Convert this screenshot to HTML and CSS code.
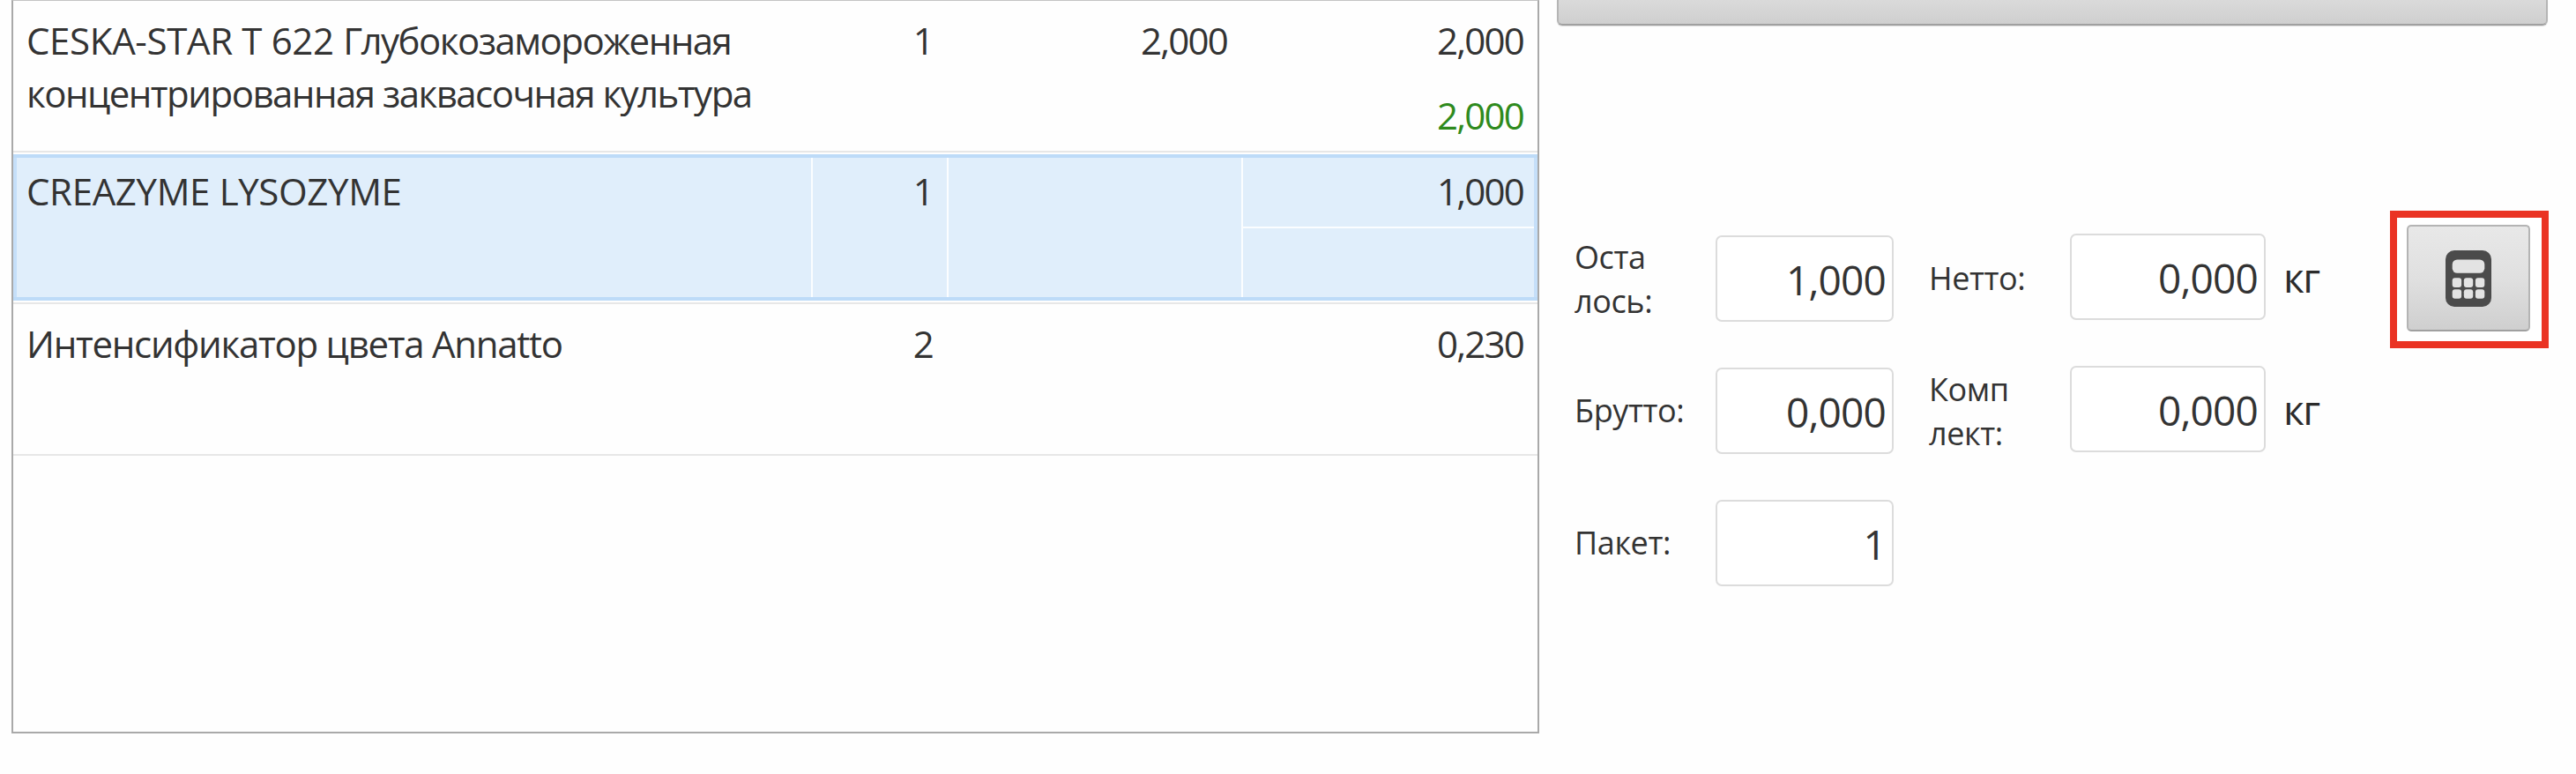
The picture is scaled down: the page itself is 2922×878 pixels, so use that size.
FILE: index.html
```html
<!DOCTYPE html>
<html lang="ru">
<head>
<meta charset="utf-8">
<title>Комплектация</title>
<link rel="stylesheet" href="styles.css">
</head>
<body>
<main class="screen">
  <section class="table">
    <div class="row">
      <div class="cells">
        <div class="cell name"><span class="latin">CESKA-STAR T 622 </span><span class="cyr">Глубокозамороженная</span><br><span class="cyr">концентрированная заквасочная культура</span></div>
        <div class="cell num">1</div>
        <div class="cell num">2,000</div>
        <div class="cell num split"><div class="upper">2,000</div><div class="lower">2,000</div></div>
      </div>
    </div>
    <div class="row selected">
      <div class="cells">
        <div class="cell name"><span class="latin">CREAZYME LYSOZYME</span></div>
        <div class="cell num">1</div>
        <div class="cell num"></div>
        <div class="cell num split"><div class="upper">1,000</div><div class="lower"></div></div>
      </div>
    </div>
    <div class="row">
      <div class="cells">
        <div class="cell name"><span class="mixed">Интенсификатор цвета Annatto</span></div>
        <div class="cell num">2</div>
        <div class="cell num"></div>
        <div class="cell num split"><div class="upper">0,230</div><div class="lower"></div></div>
      </div>
    </div>
  </section>
  <section class="side">
    <div class="bar"></div>
    <div class="controls">
      <div class="form">
        <div class="label two">Оста<br>лось:</div>
        <div class="field">1,000</div>
        <div class="label mid">Нетто:</div>
        <div class="field raised">0,000</div>
        <div class="unit">кг</div>
        <div class="label">Брутто:</div>
        <div class="field">0,000</div>
        <div class="label mid two">Комп<br>лект:</div>
        <div class="field raised">0,000</div>
        <div class="unit">кг</div>
        <div class="label">Пакет:</div>
        <div class="field">1</div>
      </div>
      <div class="highlight">
        <button class="calc" aria-label="Калькулятор">
          <svg width="52" height="64" viewBox="0 0 52 64">
            <rect width="52" height="64" rx="10" fill="#4b4b4b"/>
            <g fill="#e3e3e3">
              <rect x="7.7" y="10.5" width="36.6" height="15.3" rx="5.5"/>
              <rect x="7.7" y="31.3" width="10.4" height="10.6" rx="3"/>
              <rect x="20.8" y="31.3" width="10.4" height="10.6" rx="3"/>
              <rect x="33.9" y="31.3" width="10.4" height="10.6" rx="3"/>
              <rect x="7.7" y="44.2" width="10.4" height="10.6" rx="3"/>
              <rect x="20.8" y="44.2" width="10.4" height="10.6" rx="3"/>
              <rect x="33.9" y="44.2" width="10.4" height="10.6" rx="3"/>
            </g>
          </svg>
        </button>
      </div>
    </div>
  </section>
</main>
</body>
</html>
```
FILE: styles.css
```css
* { box-sizing: border-box; }
body {
  margin: 0;
  background: #fefefe;
  color: #333;
  font-family: "Open Sans", "Noto Sans", sans-serif;
}
.screen {
  display: flex;
  width: 2922px;
  height: 878px;
  padding-left: 13px;
  overflow: hidden;
}
.table {
  width: 1733px;
  height: 832px;
  border: 2px solid #a9a9a9;
  border-top: 1px solid #c4c4c4;
  background: #fefefe;
  font-size: 42px;
  line-height: 60px;
}
.row { height: 172px; border-bottom: 2px solid #e7e7e7; }
.cells {
  display: grid;
  grid-template-columns: 907px 154px 334px 334px;
  height: 170px;
}
.cell { padding: 15px 18px 0 15px; white-space: nowrap; }
.latin { letter-spacing: -0.35px; }
.cyr { letter-spacing: -1.52px; }
.mixed { letter-spacing: -1.27px; }
.num { text-align: right; letter-spacing: -1.8px; }
.split { padding: 0; }
.upper { height: 86px; padding: 15px 16px 0; }
.lower { height: 84px; padding: 14px 16px 0; color: #2f8a1d; }
.selected { padding: 2px 0; }
.selected .cells {
  height: 166px;
  background: #e0eefb;
  border-top: 4px solid #bddbf8;
  border-bottom: 4px solid #bddbf8;
  box-shadow: inset 4px 0 #c5dff9, inset -4px 0 #c5dff9;
}
.selected .cell { padding-top: 8px; border-right: 2px solid #fbfdff; }
.selected .num { padding-right: 16px; }
.selected .split { padding: 0 4px 0 0; border-right: 0; }
.selected .upper { height: 80px; padding: 8px 12px 0; border-bottom: 2px solid #fbfdff; }
.selected .lower { height: 78px; }
.side { width: 1176px; padding-left: 20px; }
.bar {
  width: 1124px;
  height: 29px;
  border: 2px solid #b5b5b5;
  border-top: 0;
  border-bottom-color: #a0a0a0;
  border-radius: 0 0 6px 6px;
  background: linear-gradient(#dadada, #cfcfcf);
  box-shadow: 0 1px 1px #ddd;
}
.controls { display: flex; align-items: flex-start; }
.form {
  display: grid;
  grid-template-columns: 160px 202px 200px 222px 80px;
  grid-template-rows: 98px 98px 98px;
  row-gap: 52px;
  padding: 238px 0 0 20px;
}
.label {
  padding-top: 24px;
  font-size: 36px;
  line-height: 50px;
  letter-spacing: -0.4px;
}
.two { padding-top: 0; }
.mid { padding-left: 40px; }
.field {
  height: 98px;
  padding-right: 7px;
  border: 2px solid #dcdcdc;
  border-radius: 7px;
  background: #fff;
  font-size: 46px;
  line-height: 96px;
  text-align: right;
  letter-spacing: -0.8px;
}
.raised { margin-top: -2px; }
.unit {
  padding-left: 20px;
  font-size: 46px;
  line-height: 95px;
  letter-spacing: -1.5px;
  color: #2b2b2b;
}
.highlight {
  width: 180px;
  height: 156px;
  margin: 210px 0 0 61px;
  padding: 8px 11px;
  border: 8px solid #ea3323;
  background: #fff;
}
.calc {
  display: flex;
  align-items: center;
  justify-content: center;
  width: 140px;
  height: 121px;
  padding: 0;
  border: 2px solid #b4b4b4;
  border-bottom-color: #a0a0a0;
  border-radius: 5px;
  background: linear-gradient(#e8e8e8, #e0e0e0 50%, #cfcfcf);
}
```
